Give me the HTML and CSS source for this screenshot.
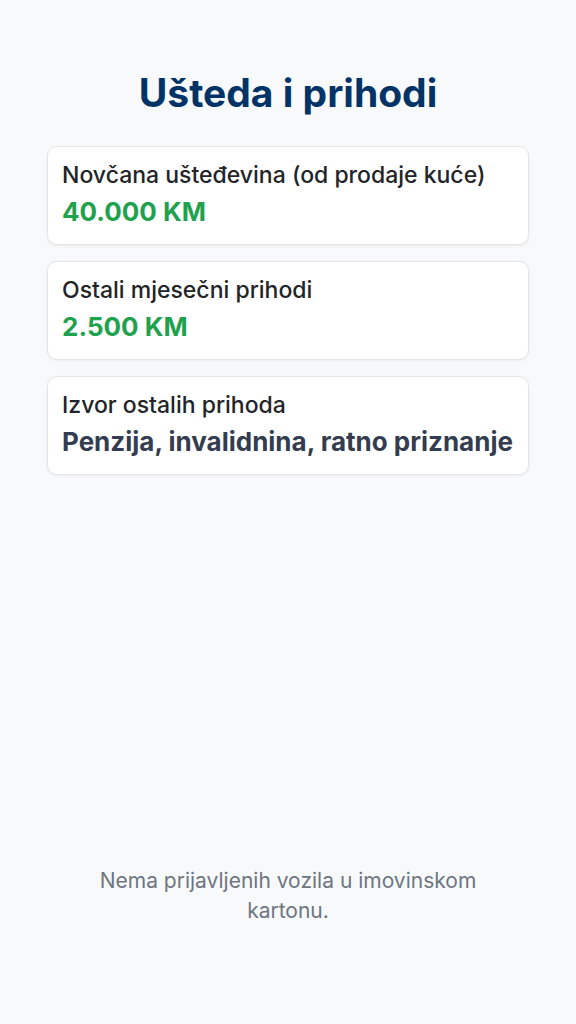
FILE: index.html
```html
<!DOCTYPE html>
<html lang="bs">
<head>
<meta charset="utf-8">
<link rel="stylesheet" href="styles.css">
</head>
<body>
<main class="page">
  <section class="content">
    <h1 class="title">Ušteda i prihodi</h1>
    <div class="cards">
      <div class="card">
        <div class="label">Novčana ušteđevina (od prodaje kuće)</div>
        <div class="value green">40.000 KM</div>
      </div>
      <div class="card">
        <div class="label">Ostali mjesečni prihodi</div>
        <div class="value green">2.500 KM</div>
      </div>
      <div class="card">
        <div class="label">Izvor ostalih prihoda</div>
        <div class="value dark">Penzija, invalidnina, ratno priznanje</div>
      </div>
    </div>
  </section>
  <p class="note">Nema prijavljenih vozila u imovinskom kartonu.</p>
</main>
</body>
</html>
```
FILE: styles.css
```css
* { box-sizing: border-box; }
html, body { margin: 0; padding: 0; }
body {
  background: #f8f9fb;
  font-family: Inter, "Noto Sans", sans-serif;
  width: 576px;
  height: 1024px;
}
.page {
  display: flex;
  flex-direction: column;
  justify-content: space-between;
  height: 1024px;
  padding: 69px 47px 98px;
}
.title {
  margin: 0 0 29px;
  text-align: center;
  font-size: 39px;
  font-weight: 700;
  color: #003366;
  line-height: 48px;
}
.cards {
  display: flex;
  flex-direction: column;
  gap: 16px;
}
.card {
  background: #fff;
  border: 1px solid #e3e5ea;
  border-radius: 10px;
  box-shadow: 0 1px 3px rgba(0,0,0,0.06);
  padding: 13px 14px 14px;
}
.label {
  font-size: 23px;
  font-weight: 500;
  color: #222428;
  line-height: 30px;
}
.value {
  margin-top: 4px;
  font-size: 26px;
  font-weight: 700;
  line-height: 36px;
}
.green { color: #1fa24e; }
.dark { color: #343d4f; }
.note {
  margin: 0 auto;
  width: 400px;
  text-align: center;
  font-size: 21px;
  line-height: 30px;
  color: #6e7681;
}
```
